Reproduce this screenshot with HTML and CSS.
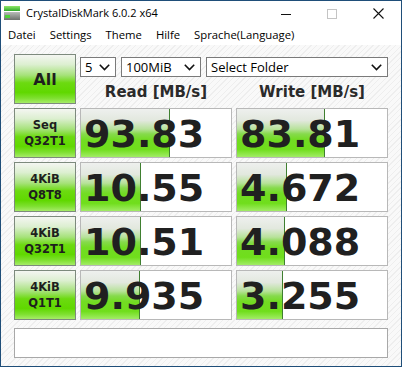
FILE: index.html
```html
<!DOCTYPE html>
<html lang="de">
<head>
    <meta charset="UTF-8">
    <meta name="viewport" content="width=device-width, initial-scale=1.0">
    <title>CrystalDiskMark 6.0.2 x64</title>
    <link rel="stylesheet" href="styles.css">
</head>
<body>
    <div class="window">
        <header class="titlebar">
            <svg class="app-icon" width="16" height="14" viewBox="0 0 16 14">
                <defs>
                    <linearGradient id="topbar" x1="0" y1="0" x2="0" y2="1">
                        <stop offset="0" stop-color="#8fe86a"/>
                        <stop offset="1" stop-color="#2fa82a"/>
                    </linearGradient>
                    <linearGradient id="drive" x1="0" y1="0" x2="0" y2="1">
                        <stop offset="0" stop-color="#b8bcb8"/>
                        <stop offset="1" stop-color="#6e726e"/>
                    </linearGradient>
                </defs>
                <rect x="0" y="0" width="16" height="5" fill="url(#topbar)"/>
                <rect x="0" y="6" width="16" height="8" fill="url(#drive)"/>
                <rect x="1" y="9" width="5" height="3" fill="#4fd03a"/>
            </svg>
            <span class="title">CrystalDiskMark 6.0.2 x64</span>
            <div class="controls">
                <span class="ctl">
                    <svg width="10" height="10" viewBox="0 0 10 10"><path d="M0 5.5H10" stroke="#111" stroke-width="1"/></svg>
                </span>
                <span class="ctl">
                    <svg width="10" height="10" viewBox="0 0 10 10"><rect x="0.5" y="0.5" width="9" height="9" fill="none" stroke="#c4c4c4" stroke-width="1"/></svg>
                </span>
                <span class="ctl">
                    <svg width="11" height="11" viewBox="0 0 11 11"><path d="M0.5 0.5L10.5 10.5M10.5 0.5L0.5 10.5" stroke="#111" stroke-width="1.1"/></svg>
                </span>
            </div>
        </header>

        <nav class="menu">
            <span>Datei</span>
            <span>Settings</span>
            <span>Theme</span>
            <span>Hilfe</span>
            <span>Sprache(Language)</span>
        </nav>

        <main class="client">
            <div class="board">
                <div class="label all">All</div>
                <div class="top">
                    <div class="combos">
                        <div class="combo">
                            <span>5</span>
                            <svg class="chev" width="11" height="7" viewBox="0 0 11 7"><path d="M0.8 0.8L5.5 5.5L10.2 0.8" fill="none" stroke="#111" stroke-width="1.6"/></svg>
                        </div>
                        <div class="combo">
                            <span>100MiB</span>
                            <svg class="chev" width="11" height="7" viewBox="0 0 11 7"><path d="M0.8 0.8L5.5 5.5L10.2 0.8" fill="none" stroke="#111" stroke-width="1.6"/></svg>
                        </div>
                        <div class="combo">
                            <span>Select Folder</span>
                            <svg class="chev" width="11" height="7" viewBox="0 0 11 7"><path d="M0.8 0.8L5.5 5.5L10.2 0.8" fill="none" stroke="#111" stroke-width="1.6"/></svg>
                        </div>
                    </div>
                    <div class="heads">
                        <span>Read [MB/s]</span>
                        <span>Write [MB/s]</span>
                    </div>
                </div>

                <div class="label">Seq<br>Q32T1</div>
                <div class="cell" style="--w: 89px">93.83</div>
                <div class="cell" style="--w: 88px">83.81</div>

                <div class="label">4KiB<br>Q8T8</div>
                <div class="cell" style="--w: 60px">10.55</div>
                <div class="cell" style="--w: 50px">4.672</div>

                <div class="label">4KiB<br>Q32T1</div>
                <div class="cell" style="--w: 60px">10.51</div>
                <div class="cell" style="--w: 48px">4.088</div>

                <div class="label">4KiB<br>Q1T1</div>
                <div class="cell" style="--w: 59px">9.935</div>
                <div class="cell" style="--w: 46px">3.255</div>
            </div>

            <div class="status"></div>
        </main>
    </div>
</body>
</html>
```

FILE: styles.css
```css
body {
    margin: 0;
    padding: 0;
    background-color: #ffffff;
}

.window {
    box-sizing: border-box;
    width: 402px;
    height: 367px;
    border: 1px solid #1f4e79;
    display: flex;
    flex-direction: column;
    background-color: #ffffff;
    font-family: "Open Sans", "Noto Sans", sans-serif;
    color: #000000;
}

/* Titelleiste */
.titlebar {
    height: 22px;
    display: flex;
    align-items: center;
    background-color: #ffffff;
}

.app-icon {
    margin-left: 3px;
    margin-top: 1px;
}

.title {
    margin-left: 6px;
    font-size: 11px;
    margin-top: 1px;
}

.controls {
    margin-left: auto;
    display: flex;
    height: 100%;
}

.ctl {
    width: 46px;
    display: flex;
    align-items: center;
    justify-content: center;
    padding-top: 3px;
}

/* Menü */
.menu {
    height: 22px;
    display: flex;
    align-items: center;
    padding-left: 0;
    background-color: #ffffff;
    font-size: 11.3px;
}

.menu span {
    padding: 0 7px;
    margin-top: 1px;
}

/* Client-Bereich */
.client {
    flex: 1;
    padding: 9px 13px 0 13px;
    background: repeating-linear-gradient(135deg, #f9f9f9 0, #f9f9f9 3px, #eeeeee 3px, #eeeeee 4px);
}

.board {
    display: grid;
    grid-template-columns: 62px 152px 152px;
    grid-auto-rows: 50px;
    column-gap: 4px;
    row-gap: 4px;
}

.label {
    box-sizing: border-box;
    border: 1px solid #7d8a7d;
    background: linear-gradient(to bottom, #f4f6f2 0%, #dcefd0 20%, #a6e27a 42%, #6cda10 58%, #60d800 78%, #7ee030 90%, #a6ec68 100%);
    display: flex;
    align-items: center;
    justify-content: center;
    text-align: center;
    font-family: "DejaVu Sans", sans-serif;
    font-weight: bold;
    font-size: 11.5px;
    line-height: 16px;
    color: #1e1e1e;
}

.label.all {
    font-size: 16px;
    padding-top: 2px;
}

.top {
    grid-column: span 2;
    display: flex;
    flex-direction: column;
}

.combos {
    display: flex;
    gap: 5px;
    margin-top: 3px;
}

.combo {
    box-sizing: border-box;
    height: 20px;
    border: 1px solid #7a7a7a;
    background-color: #ffffff;
    display: flex;
    align-items: center;
    padding: 0 4px 0 4px;
    font-size: 13px;
}

.combo:nth-child(1) { width: 36px; }
.combo:nth-child(2) { width: 80px; }
.combo:nth-child(3) { width: 182px; flex: 1; }

.combo span {
    flex: 1;
    margin-top: -1px;
}

.chev {
    margin-right: 1px;
}

.heads {
    display: grid;
    grid-template-columns: 152px 152px;
    column-gap: 4px;
    margin-top: 6px;
    font-family: "DejaVu Sans", sans-serif;
    font-weight: bold;
    font-size: 15px;
    line-height: 18px;
    color: #2a2a2a;
    text-align: center;
}

.cell {
    box-sizing: border-box;
    border: 1px solid #b8b8b8;
    background:
        linear-gradient(#3f7f30, #3f7f30) no-repeat calc(var(--w) - 1px) 0 / 1px 100%,
        linear-gradient(to bottom, #eef0ee 0%, #e2e8de 24%, #b7e29a 42%, #86da4c 52%, #72dc22 64%, #70de1c 84%, #a2ec66 100%) no-repeat 0 0 / var(--w) 100%,
        #ffffff;
    font-family: "DejaVu Sans", sans-serif;
    font-weight: bold;
    font-size: 38px;
    line-height: 46px;
    padding-top: 2px;
    padding-left: 3px;
    color: #202020;
}

.status {
    box-sizing: border-box;
    margin-top: 8px;
    height: 30px;
    border: 1px solid #a8a8a8;
    background-color: #ffffff;
}
```
